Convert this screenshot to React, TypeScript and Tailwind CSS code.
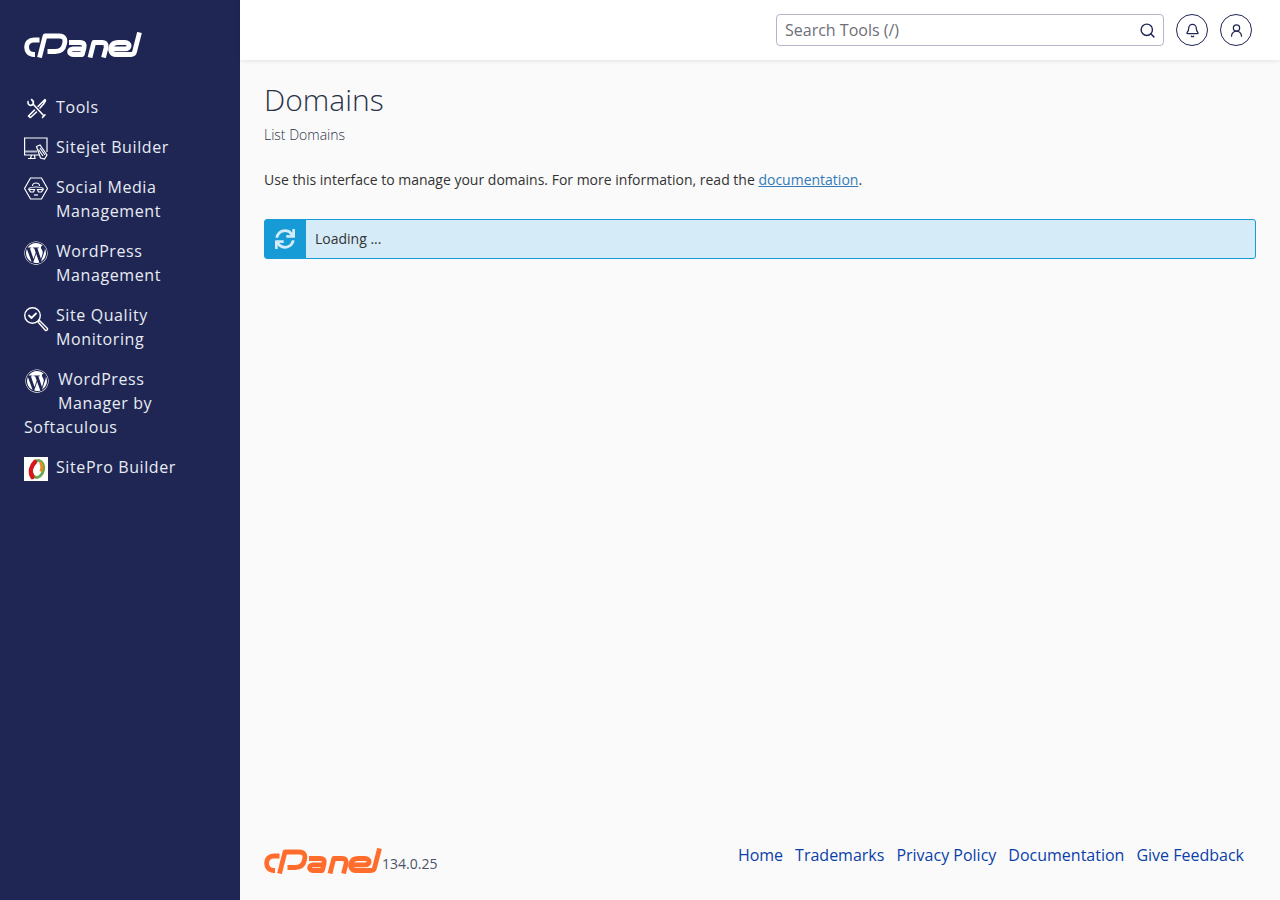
import React from "react";
import { FaWordpress, FaSync } from "react-icons/fa";
import { Search, Bell, UserRound } from "lucide-react";

function Logo({ className, color }: { className: string; color: string }) {
  return (
    <svg viewBox="0 0 118 26" className={className} fill="none" stroke={color} strokeLinejoin="round">
      <g strokeWidth="4.800">
        <path d="M15.500 8H10C5 8 2.600 11 2.600 15C2.600 19.500 5 22.500 10 22.500H11" />
        <path d="M15.500 25.500L21 4H35C41 4 41.500 8 40.500 12C39.500 17 36 19.500 31 19.500H23.500" />
        <path d="M45 10.500H56C60 10.500 61 13 60 16L58.300 22.500H49C44.500 22.500 44.500 16.800 49 16.800H59" />
        <path d="M66 25.500L69.800 10.500H78C82 10.500 82.500 13 82 16L79.500 25.500" />
        <path d="M105.500 22.500H92C87 22.500 86 18 87 15C88 12 90 10.500 94 10.500H101C106.500 10.500 106.500 16.800 101 16.800H88" />
        <path d="M115.500 0.500L110.500 20C110 22 109 22.500 107 22.500H105" />
      </g>
    </svg>
  );
}

function NavItem({ icon, children, className = "" }: { icon: React.ReactNode; children: React.ReactNode; className?: string }) {
  return (
    <div className={`flex gap-2 text-base leading-6 tracking-[0.6px] text-[#e8ecf4] font-medium ${className}`}>
      <span className="w-6 h-6 mt-[2px] -mb-[2px] shrink-0 flex items-center justify-center">{icon}</span>
      <span>{children}</span>
    </div>
  );
}

export default function App() {
  return (
    <div className="flex w-full h-[900px] overflow-hidden font-['Open_Sans',sans-serif] bg-[#fafafa]">
      <aside className="w-[240px] shrink-0 bg-[#1f2653] flex flex-col pl-6 pr-4">
        <div className="pt-[32px] h-[95px]">
          <Logo className="w-[118px] h-[26px]" color="#ffffff" />
        </div>
        <div className="flex flex-col gap-4">
          <NavItem
            icon={
              <svg viewBox="0 0 24 24" className="w-6 h-6" fill="none" stroke="#fff" strokeWidth="1.600" strokeLinecap="round" strokeLinejoin="round">
                <path d="M9 7L20 19M18.500 20.500L21 17.800" />
                <path d="M4 4.500C3.500 7.500 6 9.500 9 7.500C10 5.500 9.500 4 7.500 2.500" />
                <path d="M14 9.500L18.500 5L21 2.500L21.500 3.500L19.500 7L16 11M10.500 13L4.500 19L6.500 20.500L12.500 15" />
              </svg>
            }
          >
            Tools
          </NavItem>
          <NavItem
            icon={
              <svg viewBox="0 0 24 24" className="w-6 h-6" fill="none" stroke="#fff" strokeWidth="1.200">
                <path d="M15 18H0.600V1H23V15" />
                <path d="M1 14.500H13" stroke="#b8bccb" strokeWidth="2" />
                <path d="M7.500 18L6.500 21.500H4M10.500 18L11 21.500H4" />
                <path d="M12.500 9.500L16 8L23 18L20.500 22L16.500 21Z" fill="#1f2653" />
                <path d="M16 11L21 18M14.500 12.500L19 19" />
              </svg>
            }
          >
            Sitejet Builder
          </NavItem>
          <NavItem
            icon={
              <svg viewBox="0 0 24 24" className="w-6 h-6" fill="none" stroke="#fff" strokeWidth="1.200">
                <path d="M6.500 1H17.500L23.500 11.500L17.500 22H6.500L0.500 11.500Z" />
                <path d="M8.500 9C8.500 5 15.500 5 15.500 9" />
                <path d="M4.500 11.500C8 9.500 16 9.500 19.500 11.500" />
                <path d="M5 12.500H10.500L9.500 15H6.500ZM13.500 12.500H19L17.500 15H14.500Z" />
                <path d="M10 18H14" />
              </svg>
            }
          >
            Social Media<br />Management
          </NavItem>
          <NavItem icon={<FaWordpress className="w-6 h-6 text-white" />}>
            WordPress<br />Management
          </NavItem>
          <NavItem
            icon={
              <svg viewBox="0 0 24 24" className="w-6 h-6 overflow-visible" fill="none" stroke="#fff" strokeWidth="1.400" strokeLinecap="round" strokeLinejoin="round">
                <circle cx="8.500" cy="10.500" r="7.800" />
                <path d="M5 10.500L7.500 13L12 8.500" strokeWidth="1.800" />
                <path d="M14 17L15.500 15.500L23.500 23.500C24 24.500 22.500 26 21.500 25.500Z" />
              </svg>
            }
          >
            Site Quality<br />Monitoring
          </NavItem>
          <div className="text-base leading-6 tracking-[0.6px] text-[#e8ecf4] font-medium">
            <div className="flex">
              <span className="w-6 h-6 mt-[2px] -mb-[2px] ml-[1px] mr-[9px] shrink-0">
                <FaWordpress className="w-6 h-6 text-white" />
              </span>
              <span>WordPress<br />Manager by</span>
            </div>
            <div>Softaculous</div>
          </div>
          <NavItem
            icon={
              <span className="w-6 h-6 bg-white flex items-center justify-center">
                <svg viewBox="0 0 24 24" className="w-6 h-6" fill="none">
                  <ellipse cx="13.500" cy="12" rx="6" ry="8.500" transform="rotate(12 13.500 12)" stroke="#6aa84f" strokeWidth="3" />
                  <path d="M11 5C7 9 5.500 15 8.500 20" stroke="#d9161c" strokeWidth="4.500" strokeLinecap="round" />
                  <path d="M16 5.500C18.500 7 18 12 16.800 14.500" stroke="#f08a1d" strokeWidth="3" />
                </svg>
              </span>
            }
          >
            SitePro Builder
          </NavItem>
        </div>
      </aside>

      <div className="flex-1 flex flex-col min-w-0">
        <header className="h-[60px] bg-white shadow-[0_1px_4px_rgba(0,0,0,0.1)] flex items-center justify-end pr-7 gap-3 shrink-0">
          <div className="w-[388px] h-8 border border-[#b6b4c8] rounded flex items-center justify-between pl-2 pr-[7px] text-base text-[#6e6e78]">
            <span>Search Tools (/)</span>
            <Search className="w-[17px] h-[17px] text-[#1f2653]" strokeWidth={2} />
          </div>
          <div className="w-8 h-8 rounded-full border border-[#1f2653] flex items-center justify-center">
            <Bell className="w-[15px] h-[15px] text-[#1f2653]" strokeWidth={2} />
          </div>
          <div className="w-8 h-8 rounded-full border border-[#1f2653] flex items-center justify-center">
            <UserRound className="w-[15px] h-[15px] text-[#1f2653]" strokeWidth={2} />
          </div>
        </header>

        <main className="flex-1 flex flex-col px-6 min-h-0">
          <h1 className="mt-[22px] text-[30px] leading-[36px] font-light text-[#2a3348]">Domains</h1>
          <p className="mt-[7px] text-sm leading-5 font-light text-[#2a3348]">List Domains</p>
          <p className="mt-[25px] text-sm leading-5 text-[#333]">
            Use this interface to manage your domains. For more information, read the{" "}
            <a className="text-[#337ab7] underline">documentation</a>.
          </p>
          <div className="mt-[29px] h-10 w-[992px] flex border border-[#179bd7] rounded-[3px] bg-[#d6ebf8]">
            <div className="w-[41px] pr-px bg-[#179bd7] flex items-center justify-center shrink-0">
              <FaSync className="w-5 h-5 text-[#d6ebf8]" />
            </div>
            <div className="pl-[9px] flex items-center text-sm text-[#333]">Loading ...</div>
          </div>
          <footer className="mt-auto h-[74px] flex justify-between pr-3 pt-[8px]">
            <div className="flex items-end pb-[26px]">
              <Logo className="w-[118px] h-[26px]" color="#ff6c2c" />
              <span className="text-sm leading-5 text-[#4a5568]">134.0.25</span>
            </div>
            <nav className="flex gap-3 text-base leading-6 text-[#0a3fa8] pt-[9px]">
              <a>Home</a>
              <a>Trademarks</a>
              <a>Privacy Policy</a>
              <a>Documentation</a>
              <a>Give Feedback</a>
            </nav>
          </footer>
        </main>
      </div>
    </div>
  );
}
